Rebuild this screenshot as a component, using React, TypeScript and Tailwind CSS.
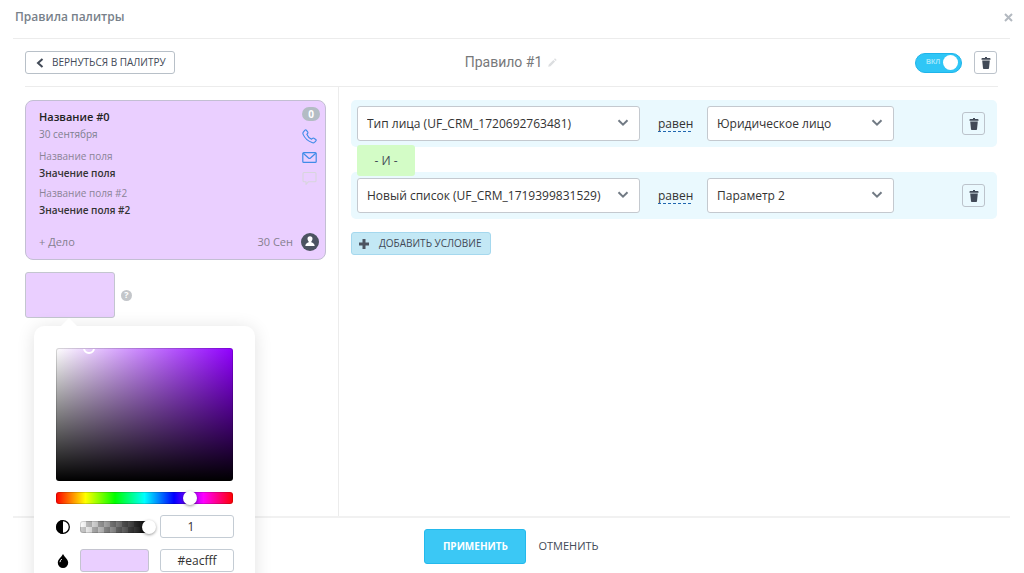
import { useState } from 'react'

const fieldOptions = ['Тип лица (UF_CRM_1720692763481)', 'Новый список (UF_CRM_1719399831529)']

const conditions = [
  { id: 1, field: fieldOptions[0], value: 'Юридическое лицо' },
  { id: 2, field: fieldOptions[1], value: 'Параметр 2' },
]

function TrashIcon() {
  return (
    <svg width="10" height="12" viewBox="0 0 10 12" fill="#424a57" aria-hidden="true">
      <path d="M4 0h2v1h2.6c.6 0 .9.3.9.8v1H.5v-1c0-.5.3-.8.9-.8H4z" />
      <path d="M1.2 3.6h7.6L8 11.2c0 .5-.3.8-.8.8H2.8c-.5 0-.8-.3-.8-.8z" />
    </svg>
  )
}

function TrashButton({ label }: { label: string }) {
  return (
    <button
      type="button"
      aria-label={label}
      className="flex h-[23px] w-[23px] shrink-0 items-center justify-center rounded-[3px] border border-[#bcc3cb]"
    >
      <TrashIcon />
    </button>
  )
}

function Select({ label, value, options, className }: { label: string; value: string; options: string[]; className: string }) {
  return (
    <div className={`relative ${className}`}>
      <select
        aria-label={label}
        defaultValue={value}
        className="h-[35px] w-full appearance-none rounded-[3px] border border-[#c4c9cf] bg-white pr-8 pl-[9px] text-[12px] text-[#333]"
      >
        {options.map((option) => (
          <option key={option}>{option}</option>
        ))}
      </select>
      <svg className="pointer-events-none absolute top-[13px] right-[11px]" width="12" height="8" viewBox="0 0 12 8" fill="none" stroke="#717a84" strokeWidth="2" aria-hidden="true">
        <path d="M1.5 1.2 6 5.7l4.5-4.5" />
      </svg>
    </div>
  )
}

function DealCard() {
  return (
    <div className="flex h-40 flex-col rounded-lg border border-[#c3bfd3] bg-[#eacfff] pt-1.5 pr-[5px] pb-2 pl-[13px]">
      <div className="flex justify-between">
        <div className="pt-px">
          <h2 className="text-[11px] leading-[18px] font-semibold text-[#222]">Название #0</h2>
          <p className="text-[10px] leading-4 text-[#80808f]">30 сентября</p>
          <dl className="mt-1.5 text-[10px]">
            <dt className="leading-4 text-[#8a8497]">Название поля</dt>
            <dd className="leading-[18px] font-semibold text-[#333]">Значение поля</dd>
            <dt className="mt-[3px] leading-4 text-[#8a8497]">Название поля #2</dt>
            <dd className="leading-[18px] font-semibold text-[#333]">Значение поля #2</dd>
          </dl>
        </div>
        <div className="flex flex-col items-center gap-1.5">
          <span className="mb-0.5 flex h-[14px] w-[18px] items-center justify-center rounded-full bg-[#b3bcc4] text-[10px] font-bold text-white">0</span>
          <svg className="mr-[3px]" width="15" height="15" viewBox="0 0 15 15" fill="none" stroke="#3f8be8" strokeWidth="1.1" strokeLinejoin="round" aria-hidden="true">
            <path d="M1.3 3.2 3 1.2c.4-.4.9-.4 1.3 0l1.5 2c.3.5.2.9-.2 1.3l-.8.8c.7 1.9 2.6 3.9 4.8 4.9l.9-.9c.4-.4.8-.4 1.3-.1l2 1.3c.5.4.5.9.1 1.3l-1.4 1.5c-.6.6-1.5.7-2.5.3C5.9 12.1 2.6 8.8 1 5.1c-.2-.7-.1-1.4.3-1.9z" />
          </svg>
          <svg className="mr-[3px]" width="15" height="15" viewBox="0 0 15 15" fill="none" stroke="#3f8be8" strokeWidth="1.2" strokeLinejoin="round" aria-hidden="true">
            <rect x=".8" y="2.6" width="13.4" height="9.8" rx="1" />
            <path d="m1.2 3.2 5.3 4.8c.6.5 1.4.5 2 0l5.3-4.8" />
          </svg>
          <svg className="mr-[3px]" width="15" height="15" viewBox="0 0 15 15" fill="none" stroke="#d8d5dd" strokeWidth="1.1" strokeLinejoin="round" aria-hidden="true">
            <path d="M2 1.5h11c.6 0 1 .4 1 1v7.2c0 .6-.4 1-1 1H6.500L4 13.4v-2.7H2c-.6 0-1-.4-1-1V2.5c0-.6.4-1 1-1z" />
          </svg>
        </div>
      </div>
      <div className="mt-auto flex items-center text-[11px] text-[#85808f]">
        <button type="button">+ Дело</button>
        <span className="ml-auto">30 Сен</span>
        <svg className="mr-px ml-2" width="18" height="18" viewBox="0 0 18 18" aria-hidden="true">
          <circle cx="9" cy="9" r="9" fill="#4c5361" />
          <path fill="#fff" d="M9 3.2c1.600 0 2.600 1.100 2.500 2.600 0 1.200-.6 2.100-1.200 2.600v.9c1.700.7 3.200 1.200 3.400 3.700H4.300c.2-2.500 1.700-3 3.400-3.700v-.9C7.100 7.900 6.500 7 6.500 5.800 6.400 4.300 7.400 3.200 9 3.200z" />
        </svg>
      </div>
    </div>
  )
}

const rangeClass =
  'block h-[10px] appearance-none bg-transparent [&::-webkit-slider-thumb]:h-[14px] [&::-webkit-slider-thumb]:w-[14px] [&::-webkit-slider-thumb]:appearance-none [&::-webkit-slider-thumb]:rounded-full [&::-webkit-slider-thumb]:bg-white [&::-webkit-slider-thumb]:shadow-[0_1px_3px_rgba(0,0,0,0.4)]'

const pickerInputClass = 'h-[23px] w-[74px] rounded-[3px] border border-[#c4ccd4] bg-white text-center text-[12px] text-[#333]'

function ColorPicker() {
  const [hue, setHue] = useState(274)

  return (
    <div className="absolute top-full left-[9px] z-20 mt-2 w-[221px] rounded-[10px] bg-white p-[22px] pb-8 shadow-[0_2px_18px_rgba(0,0,0,0.12)]">
      <svg className="absolute -top-2 left-[26px]" width="18" height="9" viewBox="0 0 18 9" fill="#fff" aria-hidden="true">
        <path d="M0 9 9 0l9 9z" />
      </svg>

      <div
        className="relative h-[133px] overflow-hidden rounded-[3px] border border-black/15 bg-origin-border"
        style={{ backgroundImage: `linear-gradient(to top, #000, transparent), linear-gradient(to right, #fff, hsl(${hue} 100% 50%))` }}
      >
        <span className="absolute -top-[7px] left-[26px] h-3 w-3 rounded-full border-2 border-white" />
      </div>

      <div className="mt-[11px] h-3 rounded-[3px] border border-black/15 bg-[linear-gradient(to_right,#f00,#ff0,#0f0,#0ff,#00f,#f0f,#f00)] bg-origin-border">
        <input
          type="range"
          aria-label="Оттенок"
          min={0}
          max={360}
          value={hue}
          onChange={(e) => setHue(Number(e.target.value))}
          className={`${rangeClass} -ml-[7px] w-[calc(100%+14px)]`}
        />
      </div>

      <div className="mt-[11px] flex items-center">
        <svg width="14" height="14" viewBox="0 0 14 14" aria-hidden="true">
          <circle cx="7" cy="7" r="6.3" fill="#fff" stroke="#000" strokeWidth="1.3" />
          <path d="M7 0a7 7 0 0 0 0 14z" />
        </svg>
        <div className="ml-[10px] h-3 w-[69px] rounded-[3px] border border-black/15 bg-[linear-gradient(to_right,transparent,#000),repeating-conic-gradient(#ccc_0_25%,#fff_0_50%)] bg-[length:100%_100%,12px_12px] bg-origin-border">
          <input type="range" aria-label="Прозрачность" min={0} max={1} step={0.01} defaultValue={1} className={`${rangeClass} w-[75px]`} />
        </div>
        <input aria-label="Значение прозрачности" defaultValue="1" className={`${pickerInputClass} -mr-px ml-auto pr-3`} />
      </div>

      <div className="mt-[11px] flex items-center">
        <svg width="14" height="14" viewBox="0 0 14 14" aria-hidden="true">
          <path d="M7 0c1.500 3 5.200 5.200 5.200 8.800A5.200 5.200 0 0 1 7 14a5.200 5.200 0 0 1-5.200-5.200C1.800 5.200 5.500 3 7 0z" />
          <path d="M4 7.800c.2-1.100.8-1.800 1.500-2.500" fill="none" stroke="#fff" strokeLinecap="round" />
        </svg>
        <span className="ml-[10px] h-[23px] w-[69px] rounded-[3px] border border-[#c4c4d0] bg-[#eacfff]" />
        <input aria-label="Цвет" defaultValue="#eacfff" className={`${pickerInputClass} -mr-px ml-auto`} />
      </div>
    </div>
  )
}

export default function App() {
  return (
    <div className="flex h-screen flex-col overflow-hidden bg-white pr-[14px] pl-[13px] font-['Open_Sans',sans-serif] text-[#333]">
      {/* Dialog title */}
      <header className="flex h-[39px] shrink-0 items-center justify-between border-b border-[#ececec] pb-1">
        <h1 className="ml-0.5 text-[12px] font-semibold text-[#78818a]">Правила палитры</h1>
        <button type="button" aria-label="Закрыть" className="-mr-1 p-px">
          <svg width="9" height="9" viewBox="0 0 9 9" fill="none" stroke="#b3b9c0" strokeWidth="2" aria-hidden="true">
            <path d="m1 1 7 7M8 1 1 8" />
          </svg>
        </button>
      </header>

      {/* Rule toolbar */}
      <div className="mx-3 grid h-12 shrink-0 grid-cols-[1fr_auto_1fr] items-center border-b border-[#ececec] pr-px">
        <button type="button" className="flex h-[23px] w-[150px] items-center gap-2 rounded-[3px] border border-[#b8c0c8] pl-[10px] text-[10px] text-[#424a57]">
          <svg width="8" height="10" viewBox="0 0 8 10" fill="none" stroke="#424a57" strokeWidth="2" aria-hidden="true">
            <path d="M6.5 1 2 5l4.5 4" />
          </svg>
          ВЕРНУТЬСЯ В ПАЛИТРУ
        </button>
        <div className="flex items-center gap-1.5">
          <h2 className="font-[Roboto,sans-serif] text-[14px] text-[#77787a]">Правило #1</h2>
          <button type="button" aria-label="Переименовать">
            <svg width="9" height="9" viewBox="0 0 9 9" fill="#dcdee0" aria-hidden="true">
              <path d="M7 .3 8.700 2l-1 1-1.700-1.700zM5.400 1.900l1.700 1.700-4.600 4.600L.2 8.800l.6-2.300z" />
            </svg>
          </button>
        </div>
        <div className="flex items-center justify-end gap-3">
          <label className="flex h-5 w-[47px] cursor-pointer items-center justify-between rounded-full border border-[#1fb4ea] bg-[#2fc6f6] pr-[3px] pl-[10px]">
            <input type="checkbox" defaultChecked className="sr-only" />
            <span className="font-['Liberation_Sans',sans-serif] text-[7px] font-bold text-[#a5e6fb]">ВКЛ</span>
            <span className="h-[15px] w-[15px] rounded-full bg-white" />
          </label>
          <TrashButton label="Удалить правило" />
        </div>
      </div>

      <main className="flex min-h-0 flex-1 pr-[13px] pl-3">
        {/* Card preview */}
        <section className="w-[314px] shrink-0 border-r border-[#ececec] pt-[13px] pr-3">
          <DealCard />
          <div className="mt-3 flex items-center gap-1.5">
            <div className="relative">
              <button type="button" aria-label="Цвет карточки" className="block h-[46px] w-[90px] rounded-[3px] border border-[#c3c6cf] bg-[#eacfff]" />
              <ColorPicker />
            </div>
            <span className="flex h-[11px] w-[11px] items-center justify-center rounded-full bg-[#c3c6ca] text-[9px] font-bold text-white">?</span>
          </div>
        </section>

        {/* Conditions */}
        <section className="flex min-w-0 flex-1 flex-col items-start pt-[13px] pl-3">
          {conditions.map((condition, index) => (
            <div key={condition.id} className="w-full">
              {index > 0 && (
                <div className="relative z-10 -mt-0.5 -mb-1 ml-1.5 flex h-[31px] w-[58px] items-center justify-center rounded-[3px] bg-[#d3fcc6] text-[12px] text-[#424a57]">
                  - И -
                </div>
              )}
              <div className="flex items-center rounded-[5px] bg-[#eaf9fe] py-1.5 pr-3 pl-1.5">
                <Select label="Поле" value={condition.field} options={fieldOptions} className="w-[283px]" />
                <button type="button" className="ml-[18px] w-[33px] border-b border-dashed border-[#2067b0] text-[12px] leading-[15px]">
                  равен
                </button>
                <Select label="Значение" value={condition.value} options={[condition.value]} className="mr-auto ml-4 w-[187px]" />
                <TrashButton label="Удалить условие" />
              </div>
            </div>
          ))}
          <button type="button" className="mt-[13px] flex h-[23px] w-[140px] items-center gap-[10px] rounded-[3px] border border-[#a5d8ee] bg-[#c3e8f5] pl-[7px] text-[10px] text-[#424a57]">
            <svg width="10" height="10" viewBox="0 0 10 10" stroke="#4c5562" strokeWidth="3" aria-hidden="true">
              <path d="M5 0v10M0 5h10" />
            </svg>
            ДОБАВИТЬ УСЛОВИЕ
          </button>
        </section>
      </main>

      {/* Actions */}
      <footer className="flex shrink-0 items-center justify-center gap-3 border-t-2 border-[#f1f1f1] pt-[11px] pb-[9px]">
        <button type="button" className="h-[35px] w-[102px] rounded-[3px] border border-[#24b9ec] bg-[#3bc8f5] text-[10px] font-bold text-white">
          ПРИМЕНИТЬ
        </button>
        <button type="button" className="text-[11px] text-[#424a57]">
          ОТМЕНИТЬ
        </button>
      </footer>
    </div>
  )
}
